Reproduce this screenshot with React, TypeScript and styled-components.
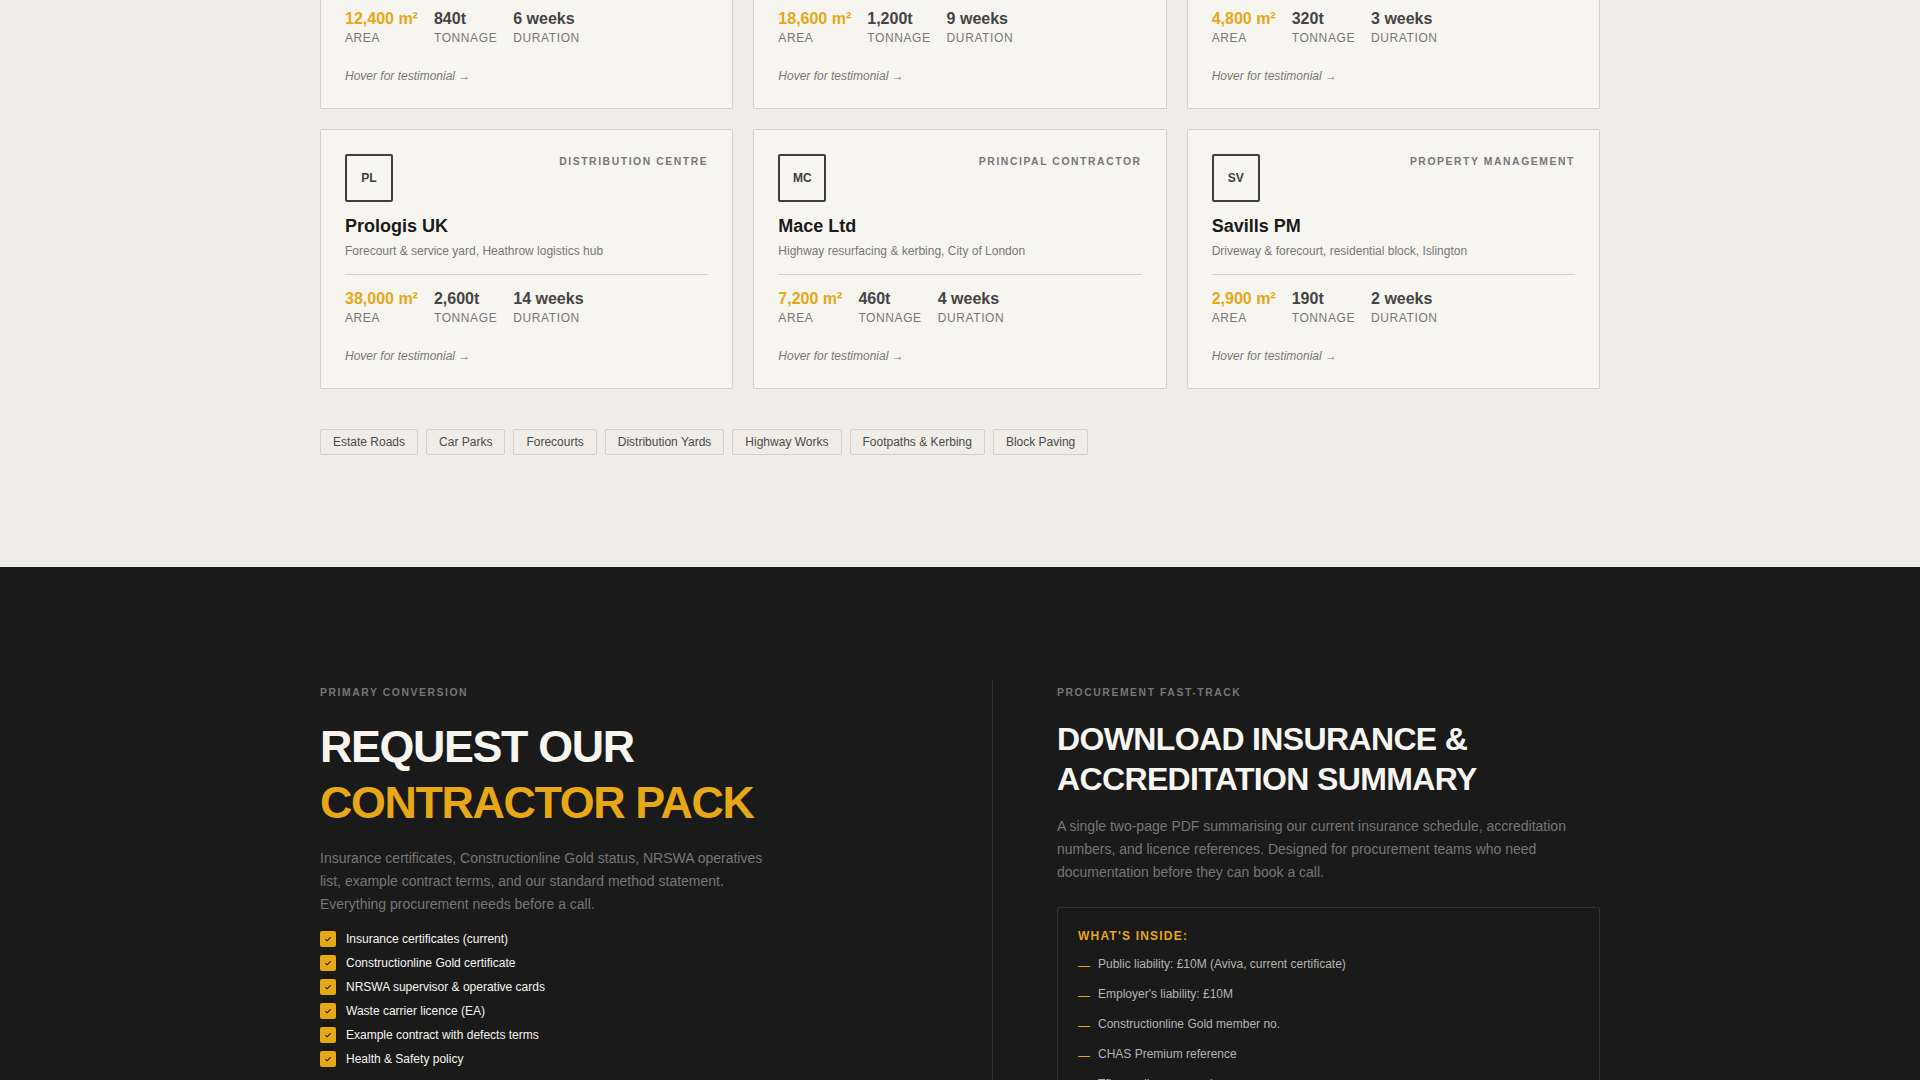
import React from "react";
import styled, { createGlobalStyle } from "styled-components";

const GlobalStyle = createGlobalStyle`
  html, body {
    margin: 0;
    padding: 0;
    height: 100%;
    overflow: hidden;
    background: #f0ede6;
  }
  body {
    font-family: "Liberation Sans", Arial, sans-serif;
  }
`;

const Page = styled.div`
  height: 1080px;
  overflow: hidden;
`;

const ProjectsSection = styled.section`
  height: 563px;
  box-sizing: border-box;
  background: #f0ede6;
`;

const Container = styled.div`
  width: 1280px;
  margin: 0 auto;
`;

const CardGrid = styled.div`
  display: grid;
  grid-template-columns: repeat(3, 1fr);
  gap: 20px;
`;

const Card = styled.article<{ $cropped?: boolean }>`
  box-sizing: border-box;
  background: #f7f5f0;
  border: 1px solid #d4d0c8;
  border-radius: 2px;
  padding: 24px;
  ${(p) =>
    p.$cropped
      ? `
    border-top: none;
    border-radius: 0 0 2px 2px;
    padding-top: 9px;
    height: 109px;
  `
      : `
    height: 260px;
  `}
`;

const CardHead = styled.div`
  display: flex;
  justify-content: space-between;
  align-items: flex-start;
  margin-bottom: 12px;
`;

const Initials = styled.div`
  box-sizing: border-box;
  width: 48px;
  height: 48px;
  border: 2px solid #3d3d3d;
  border-radius: 2px;
  display: flex;
  align-items: center;
  justify-content: center;
  font-size: 12px;
  font-weight: 700;
  color: #3d3d3d;
`;

const Sector = styled.span`
  font-size: 10.4px;
  font-weight: 700;
  letter-spacing: 1.56px;
  line-height: 13px;
  margin-top: 1px;
  text-transform: uppercase;
  color: #777;
`;

const ClientName = styled.h3`
  margin: 0 0 5px;
  font-size: 18px;
  line-height: 24px;
  font-weight: 700;
  color: #1a1a1a;
`;

const ClientWork = styled.p`
  margin: 0 0 14px;
  padding-bottom: 15px;
  font-size: 12px;
  line-height: 16px;
  color: #777;
  border-bottom: 1px solid #d4d0c8;
`;

const Stats = styled.div`
  display: flex;
  gap: 16px;
`;

const StatValue = styled.div<{ $accent?: boolean }>`
  font-size: 16px;
  line-height: 20px;
  font-weight: 700;
  color: ${(p) => (p.$accent ? "#e6a817" : "#444")};
`;

const StatLabel = styled.div`
  font-size: 12px;
  line-height: 19px;
  letter-spacing: 0.6px;
  text-transform: uppercase;
  color: #777;
`;

const HoverNote = styled.p`
  margin: 20px 0 0;
  font-size: 12px;
  line-height: 16px;
  font-style: italic;
  color: #777;
`;

const TagRow = styled.div`
  display: flex;
  gap: 8px;
  margin-top: 40px;
`;

const Tag = styled.span`
  box-sizing: border-box;
  height: 26px;
  padding: 0 12px;
  display: flex;
  align-items: center;
  font-size: 12px;
  color: #4a4a4a;
  background: #f0ede6;
  border: 1px solid #d4d0c8;
  border-radius: 2px;
`;

const Rule = styled.div`
  height: 4px;
  box-sizing: border-box;
  border-top: 1px solid #f7f5f0;
  border-bottom: 1px solid #f7f5f0;
  background: #ebe8e1;
`;

const DarkSection = styled.section`
  background: #1a1a1a;
  height: 513px;
  padding-top: 113px;
  box-sizing: border-box;
`;

const ConversionGrid = styled.div`
  display: grid;
  grid-template-columns: 608px 1px 1fr;
  gap: 64px;
  height: 400px;
`;

const Divider = styled.div`
  background: #333;
`;

const Eyebrow = styled.div`
  margin-top: 1px;
  font-size: 10.4px;
  line-height: 24px;
  font-weight: 700;
  letter-spacing: 1.56px;
  text-transform: uppercase;
  color: #777;
`;

const MainTitle = styled.h2`
  margin: 13px 0 17px;
  font-size: 44.8px;
  line-height: 56px;
  font-weight: 700;
  letter-spacing: -1.344px;
  text-transform: uppercase;
  color: #f7f5f0;
`;

const Accent = styled.span`
  display: block;
  color: #e6a817;
`;

const SubTitle = styled.h2`
  margin: 14px 0 16px;
  font-size: 32px;
  line-height: 40px;
  font-weight: 700;
  letter-spacing: -0.64px;
  text-transform: uppercase;
  color: #f7f5f0;
`;

const Lead = styled.p<{ $narrow?: boolean }>`
  margin: 0;
  font-size: 14px;
  line-height: 23px;
  color: #777;
  max-width: ${(p) => (p.$narrow ? "460px" : "none")};
`;

const CheckList = styled.ul`
  list-style: none;
  margin: 11px 0 0;
  padding: 0;
`;

const CheckItem = styled.li`
  display: flex;
  align-items: center;
  gap: 10px;
  height: 24px;
  font-size: 12px;
  color: #f7f5f0;
`;

const CheckBox = styled.span`
  width: 16px;
  height: 16px;
  border-radius: 2px;
  background: #e6a817;
  display: flex;
  align-items: center;
  justify-content: center;
  flex-shrink: 0;
`;

const InsideBox = styled.div`
  margin-top: 23px;
  padding: 20px;
  border: 1px solid #333;
  border-radius: 2px;
`;

const InsideTitle = styled.div`
  font-size: 12px;
  line-height: 16px;
  font-weight: 700;
  letter-spacing: 1.2px;
  text-transform: uppercase;
  color: #e6a817;
  margin-bottom: 12px;
`;

const InsideList = styled.ul`
  list-style: none;
  margin: 0;
  padding: 0;
`;

const InsideItem = styled.li`
  display: flex;
  gap: 8px;
  height: 30px;
  font-size: 12px;
  line-height: 16px;
  color: #b5b5b0;
`;

const Dash = styled.span`
  color: #e6a817;
  width: 12px;
  flex-shrink: 0;
  position: relative;
  top: 2px;
`;

const topCards = [
  { area: "12,400 m²", tonnage: "840t", duration: "6 weeks" },
  { area: "18,600 m²", tonnage: "1,200t", duration: "9 weeks" },
  { area: "4,800 m²", tonnage: "320t", duration: "3 weeks" },
];

const cards = [
  {
    initials: "PL",
    sector: "Distribution Centre",
    name: "Prologis UK",
    work: "Forecourt & service yard, Heathrow logistics hub",
    area: "38,000 m²",
    tonnage: "2,600t",
    duration: "14 weeks",
  },
  {
    initials: "MC",
    sector: "Principal Contractor",
    name: "Mace Ltd",
    work: "Highway resurfacing & kerbing, City of London",
    area: "7,200 m²",
    tonnage: "460t",
    duration: "4 weeks",
  },
  {
    initials: "SV",
    sector: "Property Management",
    name: "Savills PM",
    work: "Driveway & forecourt, residential block, Islington",
    area: "2,900 m²",
    tonnage: "190t",
    duration: "2 weeks",
  },
];

const tags = [
  "Estate Roads",
  "Car Parks",
  "Forecourts",
  "Distribution Yards",
  "Highway Works",
  "Footpaths & Kerbing",
  "Block Paving",
];

const checks = [
  "Insurance certificates (current)",
  "Constructionline Gold certificate",
  "NRSWA supervisor & operative cards",
  "Waste carrier licence (EA)",
  "Example contract with defects terms",
  "Health & Safety policy",
];

const inside = [
  "Public liability: £10M (Aviva, current certificate)",
  "Employer's liability: £10M",
  "Constructionline Gold member no.",
  "CHAS Premium reference",
  "Tfl compliance record",
];

const StatBlock: React.FC<{ area: string; tonnage: string; duration: string }> = ({
  area,
  tonnage,
  duration,
}) => (
  <>
    <Stats>
      <div>
        <StatValue $accent>{area}</StatValue>
        <StatLabel>Area</StatLabel>
      </div>
      <div>
        <StatValue>{tonnage}</StatValue>
        <StatLabel>Tonnage</StatLabel>
      </div>
      <div>
        <StatValue>{duration}</StatValue>
        <StatLabel>Duration</StatLabel>
      </div>
    </Stats>
    <HoverNote>Hover for testimonial →</HoverNote>
  </>
);

const App: React.FC = () => (
  <Page>
    <GlobalStyle />
    <ProjectsSection>
      <Container>
        <CardGrid>
          {topCards.map((c) => (
            <Card $cropped key={c.area}>
              <StatBlock {...c} />
            </Card>
          ))}
          {cards.map((c) => (
            <Card key={c.name}>
              <CardHead>
                <Initials>{c.initials}</Initials>
                <Sector>{c.sector}</Sector>
              </CardHead>
              <ClientName>{c.name}</ClientName>
              <ClientWork>{c.work}</ClientWork>
              <StatBlock area={c.area} tonnage={c.tonnage} duration={c.duration} />
            </Card>
          ))}
        </CardGrid>
        <TagRow>
          {tags.map((t) => (
            <Tag key={t}>{t}</Tag>
          ))}
        </TagRow>
      </Container>
    </ProjectsSection>
    <Rule />
    <DarkSection>
      <Container>
        <ConversionGrid>
          <div>
            <Eyebrow>Primary Conversion</Eyebrow>
            <MainTitle>
              Request our
              <Accent>Contractor Pack</Accent>
            </MainTitle>
            <Lead $narrow>
              Insurance certificates, Constructionline Gold status, NRSWA operatives list, example
              contract terms, and our standard method statement. Everything procurement needs before
              a call.
            </Lead>
            <CheckList>
              {checks.map((c) => (
                <CheckItem key={c}>
                  <CheckBox>
                    <svg width="10" height="10" viewBox="0 0 10 10" fill="none">
                      <path d="M2.4 5.2 4.2 6.8 7.6 3.4" stroke="#2a2414" strokeWidth="1.2" />
                    </svg>
                  </CheckBox>
                  {c}
                </CheckItem>
              ))}
            </CheckList>
          </div>
          <Divider />
          <div>
            <Eyebrow>Procurement Fast-Track</Eyebrow>
            <SubTitle>Download Insurance &amp; Accreditation Summary</SubTitle>
            <Lead>
              A single two-page PDF summarising our current insurance schedule, accreditation
              numbers, and licence references. Designed for procurement teams who need documentation
              before they can book a call.
            </Lead>
            <InsideBox>
              <InsideTitle>What's inside:</InsideTitle>
              <InsideList>
                {inside.map((i) => (
                  <InsideItem key={i}>
                    <Dash>—</Dash>
                    {i}
                  </InsideItem>
                ))}
              </InsideList>
            </InsideBox>
          </div>
        </ConversionGrid>
      </Container>
    </DarkSection>
  </Page>
);

export default App;
